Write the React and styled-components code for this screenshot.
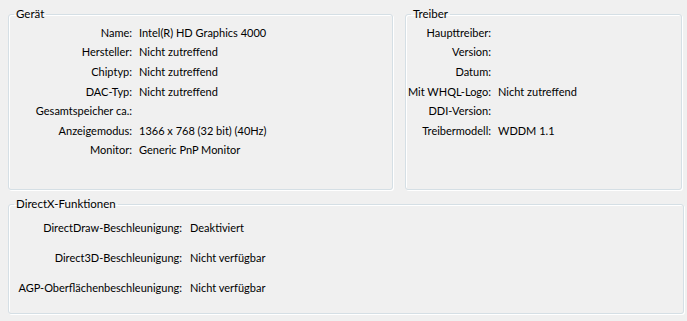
import React from 'react';
import styled, { createGlobalStyle } from 'styled-components';

const GlobalStyle = createGlobalStyle`
  html, body {
    margin: 0;
    padding: 0;
    background: #f0f0f0;
  }
  body {
    font-family: Lato, "Liberation Sans", sans-serif;
    font-size: 11px;
    color: #000;
  }
`;

const Page = styled.div`
  width: 687px;
  height: 321px;
  box-sizing: border-box;
  padding: 7px 0 0 8px;
  display: flex;
  flex-direction: column;
  gap: 7px;
`;

const TopRow = styled.div`
  display: grid;
  grid-template-columns: 385px 277px;
  column-gap: 12px;
`;

const Group = styled.fieldset`
  margin: 0;
  padding: 0;
  min-width: 0;
  height: ${({ $height }) => $height}px;
  box-sizing: border-box;
  border: 1px solid #d5dfe5;
  border-radius: 3px;
  box-shadow: 1px 1px 0 #fff, inset 1px 1px 0 #fff;
  width: ${({ $width }) => ($width ? `${$width}px` : 'auto')};
`;

const Legend = styled.legend`
  margin-left: 5px;
  padding: 0 2px;
  line-height: 14px;
  font-size: 11.5px;
`;

const Rows = styled.div`
  display: grid;
  grid-template-columns: ${({ $label }) => $label}px 1fr;
  column-gap: ${({ $gap }) => $gap}px;
  grid-auto-rows: ${({ $row }) => $row}px;
  align-items: center;
  padding-top: ${({ $top }) => $top}px;
  line-height: 14px;
  white-space: nowrap;
`;

const Label = styled.div`
  text-align: right;
`;

const Value = styled.div``;

const geraet = [
  ['Name:', 'Intel(R) HD Graphics 4000'],
  ['Hersteller:', 'Nicht zutreffend'],
  ['Chiptyp:', 'Nicht zutreffend'],
  ['DAC-Typ:', 'Nicht zutreffend'],
  ['Gesamtspeicher ca.:', ''],
  ['Anzeigemodus:', '1366 x 768 (32 bit) (40Hz)'],
  ['Monitor:', 'Generic PnP Monitor'],
];

const treiber = [
  ['Haupttreiber:', ''],
  ['Version:', ''],
  ['Datum:', ''],
  ['Mit WHQL-Logo:', 'Nicht zutreffend'],
  ['DDI-Version:', ''],
  ['Treibermodell:', 'WDDM 1.1'],
];

const directx = [
  ['DirectDraw-Beschleunigung:', 'Deaktiviert'],
  ['Direct3D-Beschleunigung:', 'Nicht verfügbar'],
  ['AGP-Oberflächenbeschleunigung:', 'Nicht verfügbar'],
];

const InfoRows = ({ items, ...props }) => (
  <Rows {...props}>
    {items.map(([label, value]) => (
      <React.Fragment key={label}>
        <Label>{label}</Label>
        <Value>{value}</Value>
      </React.Fragment>
    ))}
  </Rows>
);

export default function App() {
  return (
    <>
      <GlobalStyle />
      <Page>
        <TopRow>
          <Group $height={183}>
            <Legend>Gerät</Legend>
            <InfoRows items={geraet} $label={123} $gap={7} $row={19.6} $top={2} />
          </Group>
          <Group $height={183}>
            <Legend>Treiber</Legend>
            <InfoRows items={treiber} $label={85} $gap={7} $row={19.6} $top={2} />
          </Group>
        </TopRow>
        <Group $height={117} $width={676}>
          <Legend>DirectX-Funktionen</Legend>
          <InfoRows items={directx} $label={173} $gap={8} $row={30} $top={2} />
        </Group>
      </Page>
    </>
  );
}
